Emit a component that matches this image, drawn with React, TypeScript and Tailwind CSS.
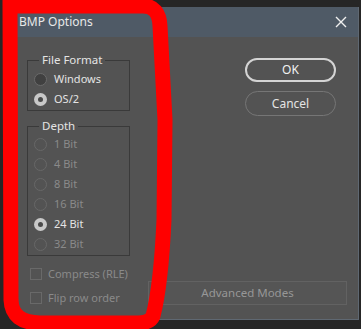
import type { ReactNode } from 'react'

const font = "font-['Noto_Sans','DejaVu_Sans',sans-serif]"

function Radio({ label, checked, disabled }: { label: string; checked?: boolean; disabled?: boolean }) {
  return (
    <div className="flex h-[20px] items-center gap-[7px] whitespace-nowrap pl-[6px]">
      {checked ? (
        <span className="flex h-[13px] w-[13px] shrink-0 items-center justify-center rounded-full bg-[#c9c9c9]">
          <span className="h-[5px] w-[5px] rounded-full bg-[#4a4a4a]" />
        </span>
      ) : disabled ? (
        <span className="h-[13px] w-[13px] shrink-0 rounded-full border border-[#686868] bg-[#535353]" />
      ) : (
        <span className="h-[13px] w-[13px] shrink-0 rounded-full border border-[#6a6a6a] bg-[#404040]" />
      )}
      <span className={disabled ? 'text-[#8a8a8a]' : 'text-[#e4e4e4]'}>{label}</span>
    </div>
  )
}

function Group({ title, children, className }: { title: string; children: ReactNode; className?: string }) {
  return (
    <fieldset className={`min-w-0 border border-[#3a3a3a] pb-[1px] ${className ?? ''}`}>
      <legend className="ml-[11px] whitespace-nowrap px-[3px] text-[11.5px] leading-[16px] text-[#e4e4e4]">{title}</legend>
      {children}
    </fieldset>
  )
}

function Check({ label }: { label: string }) {
  return (
    <div className="flex h-[24px] items-center gap-[6px] whitespace-nowrap pl-[3px]">
      <span className="h-[12px] w-[12px] shrink-0 border border-[#696969]" />
      <span className="text-[#8a8a8a]">{label}</span>
    </div>
  )
}

export default function App() {
  return (
    <div className={`relative h-[329px] w-[361px] overflow-hidden bg-[#262626] text-[11px] ${font}`}>
      <div className="pl-[14px] pt-[7px]">
        <div className="flex h-[313px] w-[345px] flex-col border-b border-r border-[#5f6872] bg-[#535353]">
          <div className="flex h-[30px] shrink-0 items-center justify-between bg-[#4f5a66] pl-[5px] pr-[11px]">
            <span className="text-[12px] text-[#e8e8e8]">BMP Options</span>
            <svg width="12" height="12" viewBox="0 0 12 12" className="text-[#f0f0f0]">
              <path d="M1 1 L11 11 M11 1 L1 11" stroke="currentColor" strokeWidth="1.4" fill="none" />
            </svg>
          </div>

          <div className="flex flex-1">
            <div className="ml-[13px] w-[103px] shrink-0 pt-[15px]">
              <Group title="File Format">
                <div className="pt-[1px]">
                  <Radio label="Windows" />
                  <Radio label="OS/2" checked />
                </div>
              </Group>
              <Group title="Depth" className="mt-[7px]">
                <Radio label="1 Bit" disabled />
                <Radio label="4 Bit" disabled />
                <Radio label="8 Bit" disabled />
                <Radio label="16 Bit" disabled />
                <Radio label="24 Bit" checked />
                <Radio label="32 Bit" disabled />
              </Group>
              <div className="mt-[6px]">
                <Check label="Compress (RLE)" />
                <Check label="Flip row order" />
              </div>
            </div>

            <div className="flex flex-1 flex-col items-end">
              <button
                type="button"
                className="mr-[22px] mt-[21px] h-[24px] w-[91px] rounded-full border-2 border-[#d4d4d4] text-[12px] text-[#f2f2f2]"
              >
                OK
              </button>
              <button
                type="button"
                className="mr-[22px] mt-[9px] h-[25px] w-[91px] rounded-full border border-[#767676] text-[12px] text-[#e4e4e4]"
              >
                Cancel
              </button>
              <button
                type="button"
                className="mb-[14px] mr-[11px] mt-auto h-[24px] w-[199px] border border-[#626262] bg-[#555555] text-[11.5px] text-[#979797]"
              >
                Advanced Modes
              </button>
            </div>
          </div>
        </div>
      </div>

      <svg className="pointer-events-none absolute inset-0" width="361" height="329" viewBox="0 0 361 329">
        <path
          d="M10 -10 L10 6 L143 6 Q159 6 160 26 L165 120 L164 220 Q161 285 153 316 Q150 323 138 323 L40 323 Q12 323 11 300 L10 6"
          stroke="#ff0000"
          strokeWidth="15"
          strokeLinejoin="round"
          strokeLinecap="round"
          fill="none"
        />
      </svg>
    </div>
  )
}
